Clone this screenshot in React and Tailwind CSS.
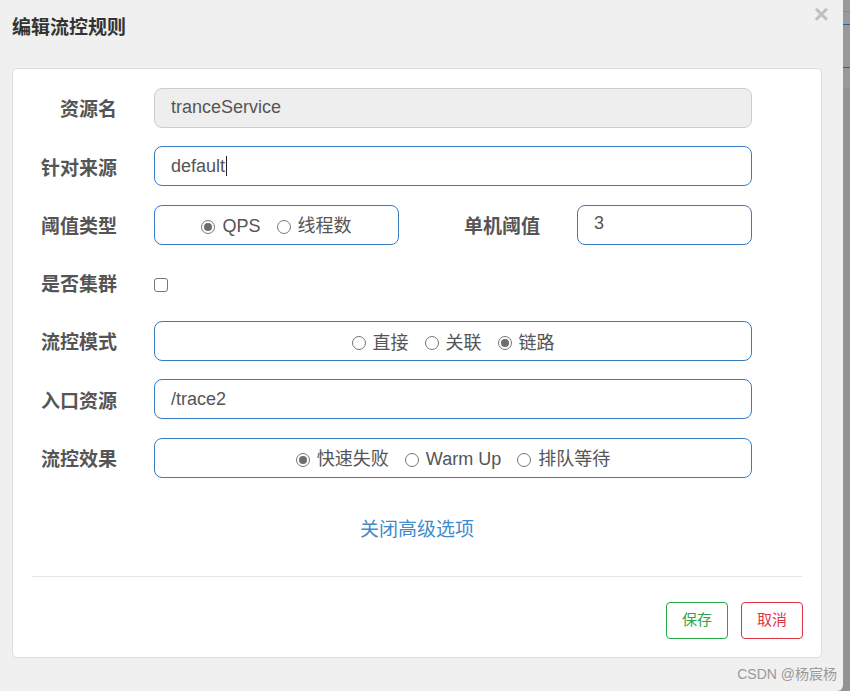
import React from "react";

const cjk = { fontFamily: '"Liberation Sans", "Noto Sans CJK SC", sans-serif' };

function Radio({ checked, label }) {
  return (
    <label className="flex items-center gap-[7px]">
      <span className="w-[14px] h-[14px] rounded-full border border-[#767676] bg-white flex items-center justify-center">
        {checked && <span className="w-[8px] h-[8px] rounded-full bg-[#6d6d6d]" />}
      </span>
      <span>{label}</span>
    </label>
  );
}

function Row({ label, children }) {
  return (
    <div className="flex items-center h-[40px]">
      <div className="w-[104px] text-right font-bold text-[19px] text-[#555] pt-[5px]">{label}</div>
      <div className="ml-[37px] flex items-center">{children}</div>
    </div>
  );
}

export default function App() {
  return (
    <div className="w-[850px] h-[691px] flex bg-[#999] overflow-hidden" style={cjk}>
      <div className="w-[843px] h-full bg-[#f0f0f0] rounded-br-[6px] relative">
        <div className="h-[68px] pl-[12px] flex items-center pb-[12px]">
          <h3 className="font-bold text-[19px] text-[#333]">编辑流控规则</h3>
        </div>
        <span className="absolute right-[14px] top-[0px] text-[26px] font-bold text-[#c0c0c0] leading-[28px]">×</span>

        <div className="ml-[12px] w-[810px] h-[590px] bg-white border border-[#ddd] rounded-[5px] pt-[19px] flex flex-col">
          <div className="flex flex-col gap-[18.3px]">
            <Row label="资源名">
              <div className="w-[598px] h-[40px] rounded-[8px] border border-[#ccc] bg-[#eee] flex items-center pl-[16px] text-[18px] text-[#555] pb-[2px]">
                tranceService
              </div>
            </Row>
            <Row label="针对来源">
              <div className="w-[598px] h-[40px] rounded-[8px] border border-[#3a7cc0] flex items-center pl-[16px] text-[18px] text-[#555]">
                default<span className="w-px h-[20px] bg-[#222] ml-px" />
              </div>
            </Row>
            <Row label="阈值类型">
              <div className="w-[245px] h-[40px] rounded-[8px] border border-[#3a7cc0] flex items-center justify-center gap-[16px] text-[18px] text-[#555] pt-[4px]">
                <Radio checked label="QPS" />
                <Radio label="线程数" />
              </div>
              <div className="w-[141px] text-right font-bold text-[19px] text-[#555] pt-[5px]">单机阈值</div>
              <div className="ml-[37px] w-[175px] h-[40px] rounded-[8px] border border-[#3a7cc0] flex items-center pl-[16px] text-[18px] text-[#555] pb-[2px]">
                3
              </div>
            </Row>
            <Row label="是否集群">
              <span className="w-[14px] h-[14px] rounded-[3px] border border-[#767676] bg-white mt-[4px]" />
            </Row>
            <Row label="流控模式">
              <div className="w-[598px] h-[40px] rounded-[8px] border border-[#3a7cc0] flex items-center justify-center gap-[16px] text-[18px] text-[#555] pt-[4px]">
                <Radio label="直接" />
                <Radio label="关联" />
                <Radio checked label="链路" />
              </div>
            </Row>
            <Row label="入口资源">
              <div className="w-[598px] h-[40px] rounded-[8px] border border-[#3a7cc0] flex items-center pl-[16px] text-[18px] text-[#555]">
                /trace2
              </div>
            </Row>
            <Row label="流控效果">
              <div className="w-[598px] h-[40px] rounded-[8px] border border-[#3a7cc0] flex items-center justify-center gap-[16px] text-[18px] text-[#555] pt-[4px]">
                <Radio checked label="快速失败" />
                <Radio label="Warm Up" />
                <Radio label="排队等待" />
              </div>
            </Row>
          </div>

          <div className="mt-[39px] text-center text-[19px] text-[#428bca] leading-[26px]">
            关闭高级选项
          </div>

          <div className="mx-[19px] mt-[33px] border-t border-[#e5e5e5]" />

          <div className="flex justify-end gap-[13px] mr-[18px] mt-[25px]">
            <button className="w-[62px] h-[37px] rounded-[4px] border border-[#28a745] text-[#28a745] text-[15px]">保存</button>
            <button className="w-[62px] h-[37px] rounded-[4px] border border-[#dc3545] text-[#dc3545] text-[15px]">取消</button>
          </div>
        </div>

        <div className="absolute right-[6px] bottom-[6px] text-[14px] text-[#999]">CSDN @杨宸杨</div>
      </div>
      <div className="flex-1 flex flex-col">
        <div className="h-[12px] bg-[#9a9a9a] border-b border-[#888]" />
        <div className="h-[13px] bg-[#999] border-b border-[#2f5f9a]" />
        <div className="h-[43px] bg-[#999] border-b border-[#2f5f9a]" />
        <div className="h-[20px] bg-[#999]" />
        <div className="flex-1 bg-[#939393]" />
      </div>
    </div>
  );
}
